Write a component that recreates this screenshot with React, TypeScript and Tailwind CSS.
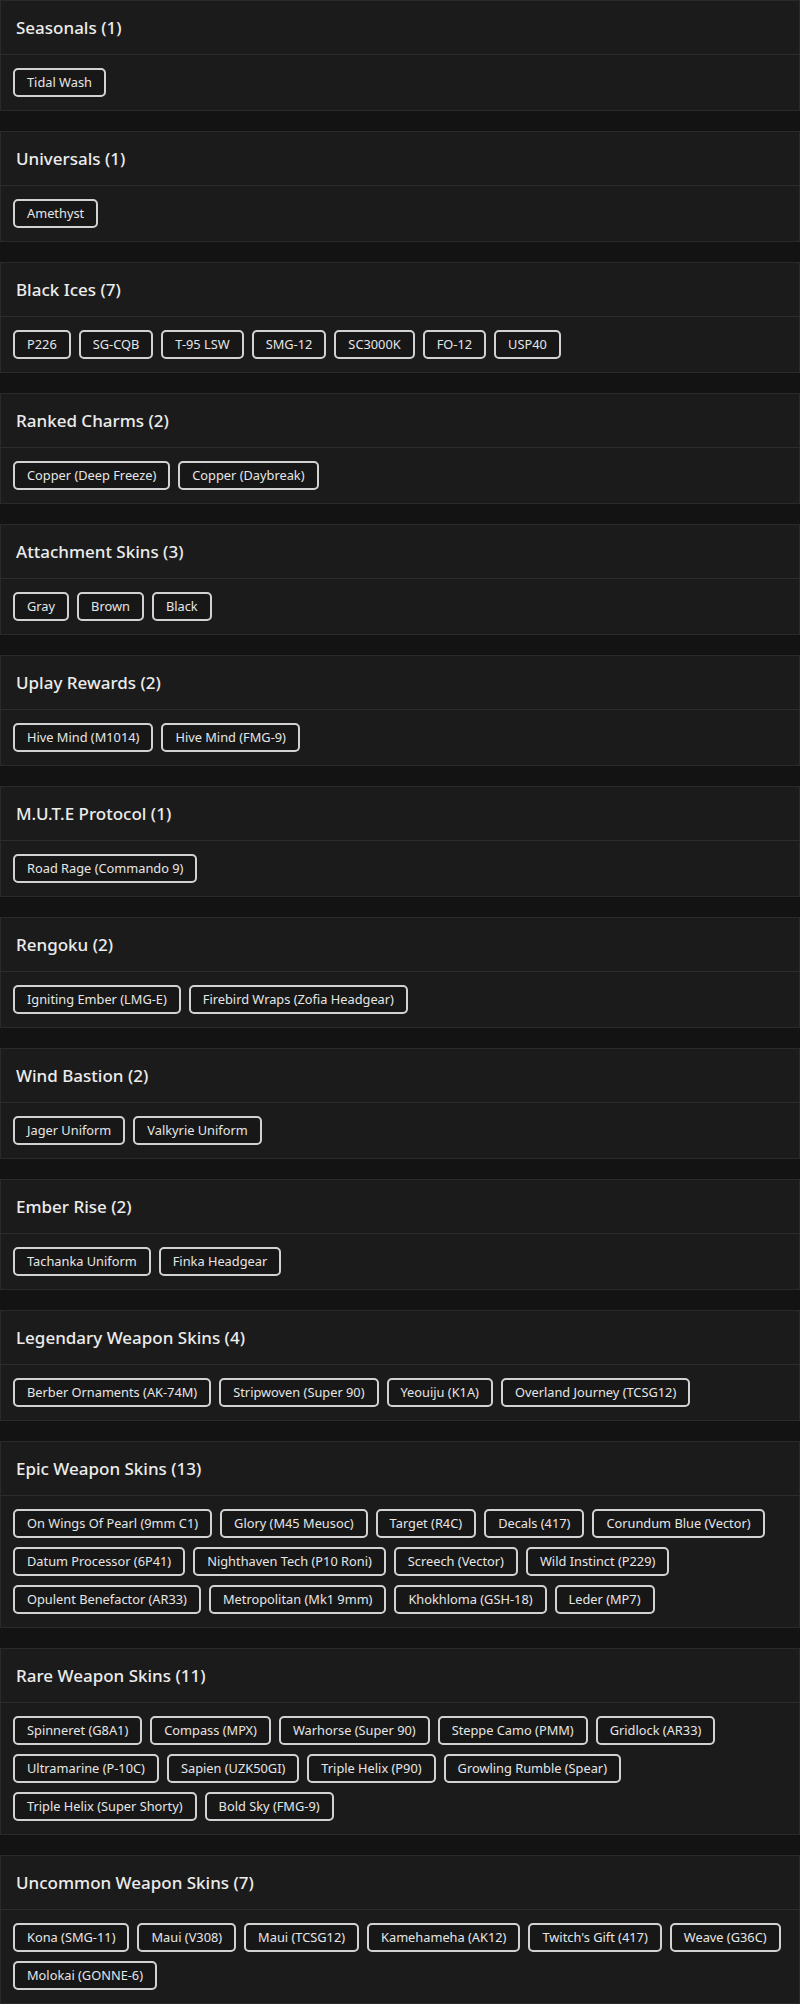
const sections: { title: string; items: string[] }[] = [
  { title: "Seasonals", items: ["Tidal Wash"] },
  { title: "Universals", items: ["Amethyst"] },
  { title: "Black Ices", items: ["P226", "SG-CQB", "T-95 LSW", "SMG-12", "SC3000K", "FO-12", "USP40"] },
  { title: "Ranked Charms", items: ["Copper (Deep Freeze)", "Copper (Daybreak)"] },
  { title: "Attachment Skins", items: ["Gray", "Brown", "Black"] },
  { title: "Uplay Rewards", items: ["Hive Mind (M1014)", "Hive Mind (FMG-9)"] },
  { title: "M.U.T.E Protocol", items: ["Road Rage (Commando 9)"] },
  { title: "Rengoku", items: ["Igniting Ember (LMG-E)", "Firebird Wraps (Zofia Headgear)"] },
  { title: "Wind Bastion", items: ["Jager Uniform", "Valkyrie Uniform"] },
  { title: "Ember Rise", items: ["Tachanka Uniform", "Finka Headgear"] },
  {
    title: "Legendary Weapon Skins",
    items: ["Berber Ornaments (AK-74M)", "Stripwoven (Super 90)", "Yeouiju (K1A)", "Overland Journey (TCSG12)"],
  },
  {
    title: "Epic Weapon Skins",
    items: [
      "On Wings Of Pearl (9mm C1)",
      "Glory (M45 Meusoc)",
      "Target (R4C)",
      "Decals (417)",
      "Corundum Blue (Vector)",
      "Datum Processor (6P41)",
      "Nighthaven Tech (P10 Roni)",
      "Screech (Vector)",
      "Wild Instinct (P229)",
      "Opulent Benefactor (AR33)",
      "Metropolitan (Mk1 9mm)",
      "Khokhloma (GSH-18)",
      "Leder (MP7)",
    ],
  },
  {
    title: "Rare Weapon Skins",
    items: [
      "Spinneret (G8A1)",
      "Compass (MPX)",
      "Warhorse (Super 90)",
      "Steppe Camo (PMM)",
      "Gridlock (AR33)",
      "Ultramarine (P-10C)",
      "Sapien (UZK50GI)",
      "Triple Helix (P90)",
      "Growling Rumble (Spear)",
      "Triple Helix (Super Shorty)",
      "Bold Sky (FMG-9)",
    ],
  },
  {
    title: "Uncommon Weapon Skins",
    items: [
      "Kona (SMG-11)",
      "Maui (V308)",
      "Maui (TCSG12)",
      "Kamehameha (AK12)",
      "Twitch's Gift (417)",
      "Weave (G36C)",
      "Molokai (GONNE-6)",
    ],
  },
];

const Chip = ({ label }: { label: string }) => (
  <span className="flex h-[29px] items-center rounded-[5px] border-2 border-[#d2d2d2] bg-[#171717] px-3 text-[12.8px] leading-none text-[#e6e6e6]">
    {label}
  </span>
);

const Section = ({ title, items }: { title: string; items: string[] }) => (
  <section className="border border-[#2a2a2a] bg-[#1b1b1b]">
    <div className="flex h-[54px] items-center border-b border-[#2c2c2c] px-[15px]">
      <h2 className="text-[17px] font-medium text-[#ececec]">
        {title} ({items.length})
      </h2>
    </div>
    <div className="flex flex-wrap gap-x-2 gap-y-[9px] px-3 py-[13px]">
      {items.map((item) => (
        <Chip key={item} label={item} />
      ))}
    </div>
  </section>
);

export default function App() {
  return (
    <main
      className="flex min-h-screen w-[800px] flex-col gap-5 bg-[#131313]"
      style={{ fontFamily: '"Noto Sans", "Open Sans", sans-serif' }}
    >
      {sections.map((s) => (
        <Section key={s.title} title={s.title} items={s.items} />
      ))}
    </main>
  );
}
